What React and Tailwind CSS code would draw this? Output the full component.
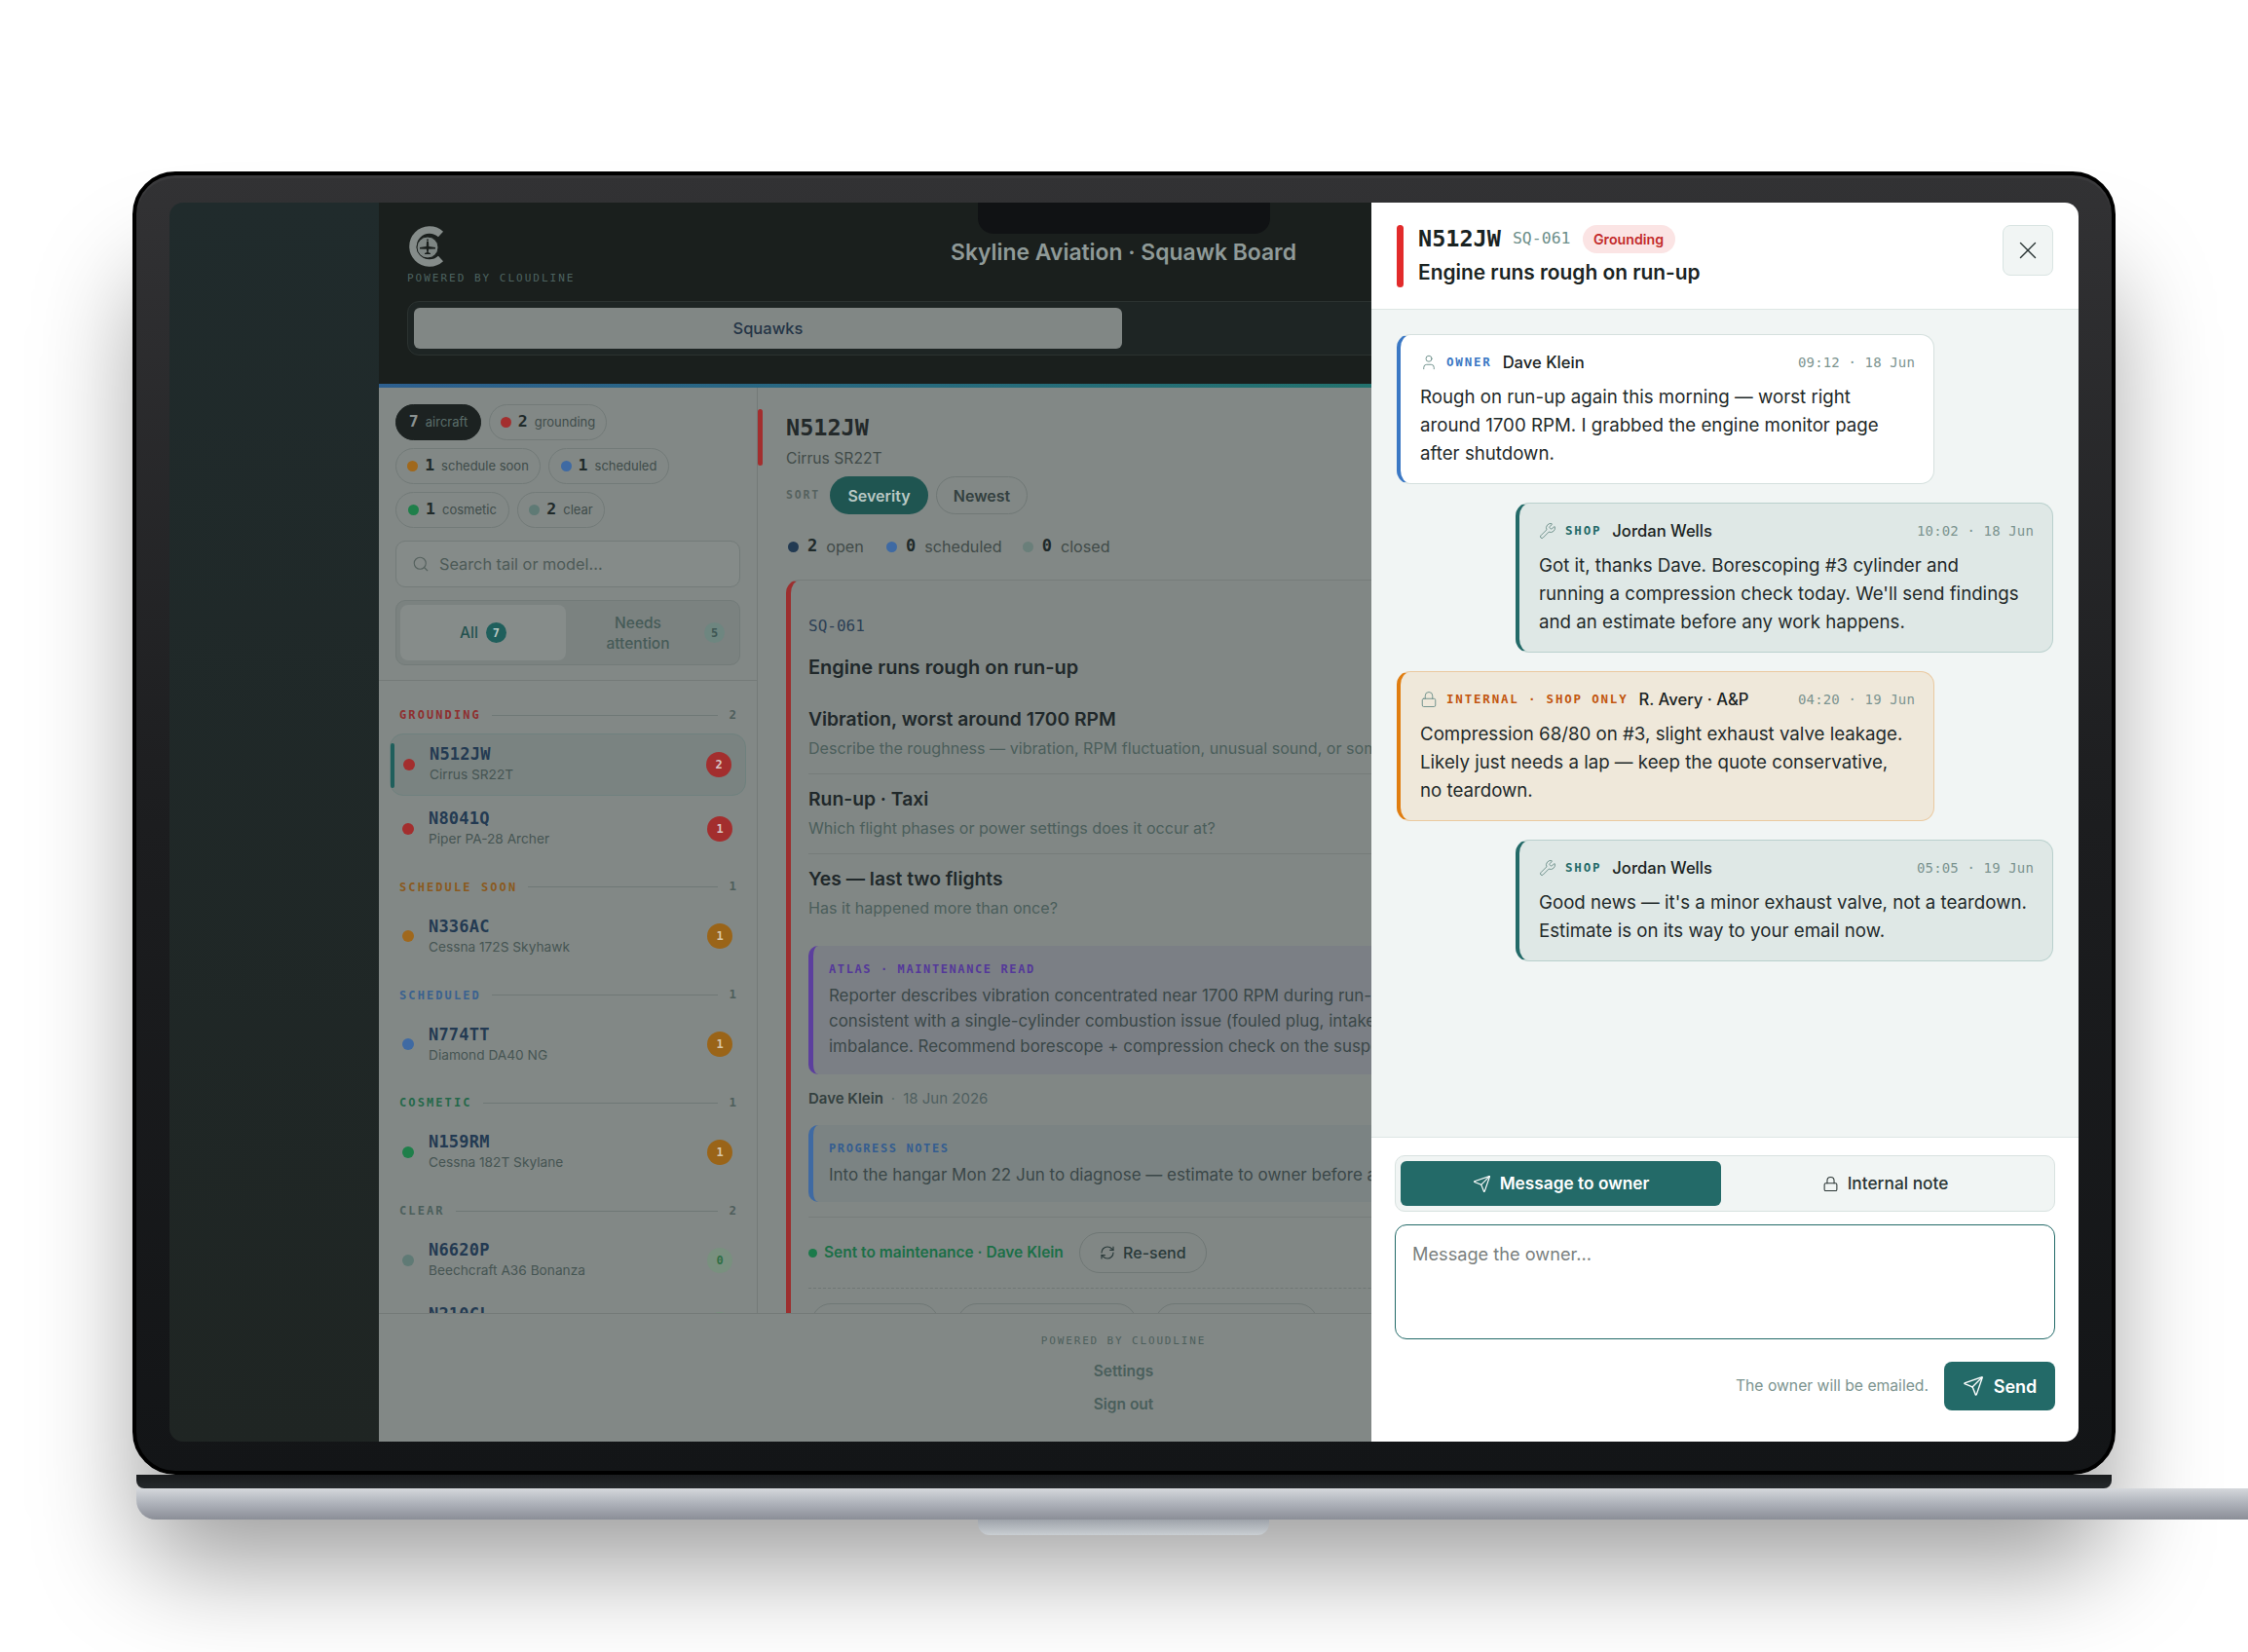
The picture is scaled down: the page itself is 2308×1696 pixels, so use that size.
import { Search, Send, User, Wrench, Lock, X, RefreshCw } from 'lucide-react';

const mono = "font-['DejaVu_Sans_Mono',monospace]";

const chips = [
  { n: 7, label: 'aircraft', width: 'w-[88px]', dark: true },
  { n: 2, label: 'grounding', width: 'w-[121px]', dot: 'bg-[#a32e2e]' },
  { n: 1, label: 'schedule soon', width: 'w-[149px]', dot: 'bg-[#a0681c]' },
  { n: 1, label: 'scheduled', width: 'w-[124px]', dot: 'bg-[#3f6aa3]' },
  { n: 1, label: 'cosmetic', width: 'w-[117px]', dot: 'bg-[#1f7f4a]' },
  { n: 2, label: 'clear', width: 'w-[90px]', dot: 'bg-[#5f7a75]' },
];

const sections = [
  {
    name: 'GROUNDING', count: 2, color: 'text-[#8f2f2f]',
    rows: [
      { tail: 'N512JW', model: 'Cirrus SR22T', dot: 'bg-[#a32e2e]', badge: 'bg-[#a32e2e] text-[#d8c4c2]', n: 2, active: true },
      { tail: 'N8041Q', model: 'Piper PA-28 Archer', dot: 'bg-[#a32e2e]', badge: 'bg-[#a32e2e] text-[#d8c4c2]', n: 1 },
    ],
  },
  {
    name: 'SCHEDULE SOON', count: 1, color: 'text-[#8a5a20]',
    rows: [{ tail: 'N336AC', model: 'Cessna 172S Skyhawk', dot: 'bg-[#a0681c]', badge: 'bg-[#9a6418] text-[#d6c6a8]', n: 1 }],
  },
  {
    name: 'SCHEDULED', count: 1, color: 'text-[#3a628f]',
    rows: [{ tail: 'N774TT', model: 'Diamond DA40 NG', dot: 'bg-[#3f6aa3]', badge: 'bg-[#9a6418] text-[#d6c6a8]', n: 1 }],
  },
  {
    name: 'COSMETIC', count: 1, color: 'text-[#25684a]',
    rows: [{ tail: 'N159RM', model: 'Cessna 182T Skylane', dot: 'bg-[#1f7f4a]', badge: 'bg-[#9a6418] text-[#d6c6a8]', n: 1 }],
  },
  {
    name: 'CLEAR', count: 2, color: 'text-[#4c5f5c]',
    rows: [
      { tail: 'N6620P', model: 'Beechcraft A36 Bonanza', dot: 'bg-[#5f7a75]', badge: 'bg-[#79907f] text-[#2f6f45]', n: 0 },
      { tail: 'N210CL', model: 'Cessna 210 Centurion', dot: 'bg-[#5f7a75]', badge: 'bg-[#79907f] text-[#2f6f45]', n: 0 },
    ],
  },
];

const messages = [
  {
    kind: 'owner', Icon: User, role: 'OWNER', name: 'Dave Klein', time: '09:12 · 18 Jun',
    lines: ['Rough on run-up again this morning — worst right', 'around 1700 RPM. I grabbed the engine monitor page', 'after shutdown.'],
  },
  {
    kind: 'shop', Icon: Wrench, role: 'SHOP', name: 'Jordan Wells', time: '10:02 · 18 Jun',
    lines: ['Got it, thanks Dave. Borescoping #3 cylinder and', "running a compression check today. We'll send findings", 'and an estimate before any work happens.'],
  },
  {
    kind: 'internal', Icon: Lock, role: 'INTERNAL · SHOP ONLY', name: 'R. Avery · A&P', time: '04:20 · 19 Jun',
    lines: ['Compression 68/80 on #3, slight exhaust valve leakage.', 'Likely just needs a lap — keep the quote conservative,', 'no teardown.'],
  },
  {
    kind: 'shop', Icon: Wrench, role: 'SHOP', name: 'Jordan Wells', time: '05:05 · 19 Jun',
    lines: ["Good news — it's a minor exhaust valve, not a teardown.", 'Estimate is on its way to your email now.'],
  },
];

const bubbleStyles = {
  owner: { box: 'bg-white border-[#d5e0de] border-l-[#3b78c4] self-start', role: 'text-[#3b78c4]' },
  shop: { box: 'bg-[#dfe8e6] border-[#b9d0cd] border-l-[#236a68] self-end', role: 'text-[#236a68]' },
  internal: { box: 'bg-[#efe8da] border-[#eac9a0] border-l-[#e07d10] self-start', role: 'text-[#c2560f]' },
};

// C ring with an inset disc and a small plane silhouette
function Logo() {
  return (
    <svg width="40" height="44" viewBox="0 0 40 44" fill="none">
      <path d="M34.5 9.5 A17 17 0 1 0 34.5 34.5" stroke="#858c8a" strokeWidth="7.5" />
      <circle cx="21" cy="23" r="11" fill="#7d8583" stroke="#1a1f1d" strokeWidth="1" />
      <path d="M20.2 14.5h1.6v2h-1.6z M20 17h2l.3 5 6.7 1v1.5l-6.9.2-.4 3.3 2.3 1v1h-6v-1l2.3-1-.4-3.3-6.9-.2V23l6.7-1z" fill="#1a1f1d" />
    </svg>
  );
}

function Chip({ chip }) {
  return (
    <div className={`flex h-[37px] items-center justify-center gap-[7px] rounded-full border ${chip.width} ${chip.dark ? 'border-[#1c2221] bg-[#1c2221]' : 'border-[#727a78]'}`}>
      {chip.dot && <span className={`h-[11px] w-[11px] rounded-full ${chip.dot}`} />}
      <span className={`${mono} text-[16.5px] font-bold ${chip.dark ? 'text-[#8b9290]' : 'text-[#1f2a2a]'}`}>{chip.n}</span>
      <span className={`text-[13px] ${chip.dark ? 'text-[#5b6e6b]' : 'text-[#3f4c4a]'}`}>{chip.label}</span>
    </div>
  );
}

function AircraftRow({ row }) {
  return (
    <div className={`relative flex h-16 shrink-0 items-center gap-[15px] rounded-[14px] pl-[13px] pr-[14px] ${row.active ? 'border border-[#6f817e] bg-[#7a8381]' : ''}`}>
      {row.active && <span className="absolute left-0 top-[9px] h-[46px] w-1 rounded-full bg-[#1f5f5c]" />}
      <span className={`h-[12px] w-[12px] shrink-0 rounded-full ${row.dot}`} />
      <div className="flex min-w-0 flex-1 flex-col gap-px">
        <span className={`${mono} text-[17px] font-bold leading-5 tracking-[0.2px] text-[#233a52]`}>{row.tail}</span>
        <span className="text-[13.7px] leading-5 text-[#465553]">{row.model}</span>
      </div>
      <span className={`${mono} flex h-[26px] w-[26px] items-center justify-center rounded-full text-[12px] font-bold ${row.badge}`}>{row.n}</span>
    </div>
  );
}

function SidebarSection({ section }) {
  return (
    <div className="flex flex-col">
      <div className="flex h-[23px] shrink-0 items-center gap-[11px] px-[10px]">
        <span className={`${mono} text-[12px] font-bold tracking-[2.1px] ${section.color}`}>{section.name}</span>
        <span className="h-px flex-1 bg-[#6f7876]" />
        <span className={`${mono} text-[12.5px] font-bold text-[#4f5e5c]`}>{section.count}</span>
      </div>
      <div className="mt-[7px] flex flex-col gap-[2px]">
        {section.rows.map((row) => <AircraftRow key={row.tail} row={row} />)}
      </div>
    </div>
  );
}

function Sidebar() {
  return (
    <aside className="flex h-full w-[389px] shrink-0 flex-col overflow-hidden border-r border-[#747a78]">
      <div className="shrink-0 border-b border-[#747a78] px-[17px] pb-[15px] pt-[17px]">
        <div className="flex flex-wrap gap-2">
          {chips.map((chip) => <Chip key={chip.label} chip={chip} />)}
        </div>
        <div className="mt-[13px] flex h-12 items-center gap-[10px] rounded-[10px] border border-[#737b79] bg-[#858b89] px-4">
          <Search size={18} strokeWidth={1.5} className="text-[#56625f]" />
          <span className="text-[16.3px] text-[#4d5a57]">Search tail or model...</span>
        </div>
        <div className="mt-[13px] flex h-[67px] gap-2 rounded-[10px] border border-[#737b79] bg-[#7b8280] p-1">
          <div className="flex w-[170px] items-center justify-center gap-2 rounded-lg bg-[#868c8a]">
            <span className="text-[15.5px] font-medium text-[#24524f]">All</span>
            <span className={`${mono} flex h-[21px] w-[21px] items-center justify-center rounded-full bg-[#1f5f5c] text-[12px] font-bold text-[#b8c6c2]`}>7</span>
          </div>
          <div className="flex flex-1 items-center gap-[30px] pl-[28px]">
            <span className="w-[76px] text-center text-[15.5px] font-medium leading-[21px] text-[#465b58]">Needs<br />attention</span>
            <span className={`${mono} flex h-[21px] w-[21px] items-center justify-center rounded-full bg-[#6e8680] text-[12px] font-bold text-[#3f5754]`}>5</span>
          </div>
        </div>
      </div>
      <div className="flex flex-col gap-[16.75px] px-[11px] pt-[23.5px]">
        {sections.map((section) => <SidebarSection key={section.name} section={section} />)}
      </div>
    </aside>
  );
}

function Question({ title, hint, divider = true }) {
  return (
    <div className={divider ? 'border-b border-[#767c7a] pb-[15px]' : ''}>
      <p className="whitespace-nowrap text-[19.3px] font-semibold leading-7 text-[#20282a]">{title}</p>
      <p className="mt-[5px] whitespace-nowrap text-[16.1px] leading-[22px] text-[#4b5e5b]">{hint}</p>
    </div>
  );
}

function SquawkCard() {
  return (
    <div className="ml-[29px] mt-[22px] rounded-[14px] border border-[#767c7a] border-l-[5px] border-l-[#9c2f2f] bg-[#818785] pl-[18px] pt-[37px]">
      <p className={`${mono} text-[16px] font-medium leading-5 text-[#2c4055]`}>SQ-061</p>
      <p className="mt-[18px] whitespace-nowrap text-[20px] font-semibold leading-7 text-[#20282a]">Engine runs rough on run-up</p>
      <div className="mt-[25px] flex flex-col gap-[11px]">
        <Question title="Vibration, worst around 1700 RPM" hint="Describe the roughness — vibration, RPM fluctuation, unusual sound, or something else" />
        <Question title="Run-up · Taxi" hint="Which flight phases or power settings does it occur at?" />
        <Question title="Yes — last two flights" hint="Has it happened more than once?" divider={false} />
      </div>
      <div className="mt-[28px] rounded-[10px] border-l-[5px] border-l-[#5c3f9e] bg-[#7b7f85] pb-4 pl-4 pt-4">
        <p className={`${mono} text-[12px] font-bold leading-4 tracking-[1.6px] text-[#54389a]`}>ATLAS · MAINTENANCE READ</p>
        <p className="mt-[6px] whitespace-nowrap text-[16.9px] leading-[26px] text-[#3a4748]">
          Reporter describes vibration concentrated near 1700 RPM during run-up and taxi,<br />
          consistent with a single-cylinder combustion issue (fouled plug, intake leak) or prop<br />
          imbalance. Recommend borescope + compression check on the suspect cylinder.
        </p>
      </div>
      <p className="mt-[15px] flex h-5 items-center gap-2 text-[15px]">
        <span className="font-semibold text-[#33403f]">Dave Klein</span>
        <span className="text-[#5c6d6a]">·</span>
        <span className="text-[#4f5f60]">18 Jun 2026</span>
      </p>
      <div className="mt-[17px] rounded-[10px] border-l-[5px] border-l-[#3f6aa3] bg-[#7b8383] pb-[15px] pl-4 pt-4">
        <p className={`${mono} text-[12px] font-bold leading-4 tracking-[1.6px] text-[#345d90]`}>PROGRESS NOTES</p>
        <p className="mt-[6px] whitespace-nowrap text-[17px] leading-[26px] text-[#3a4748]">Into the hangar Mon 22 Jun to diagnose — estimate to owner before any work</p>
      </div>
      <div className="mt-[15px] flex items-center gap-4 border-t border-[#767c7a] pt-[15px]">
        <span className="flex items-center gap-[7px] text-[15.5px] font-semibold text-[#1b6f47]">
          <span className="h-[9px] w-[9px] rounded-full bg-[#1b7a4a]" />
          Sent to maintenance · Dave Klein
        </span>
        <span className="flex h-[42px] w-[131px] items-center justify-center gap-2 rounded-full border border-[#6f7775] text-[16px] font-medium text-[#2a3a3a]">
          <RefreshCw size={16} strokeWidth={1.75} />
          Re-send
        </span>
      </div>
      <div className="mt-[15px] flex gap-[19px] border-t border-dashed border-[#6f7775] pl-[3px] pt-[15px]">
        <span className="h-10 w-[131px] rounded-full border border-[#6f7775]" />
        <span className="h-10 w-[184px] rounded-full border border-[#6f7775]" />
        <span className="h-10 w-[167px] rounded-full border border-[#6f7775]" />
      </div>
    </div>
  );
}

function MainColumn() {
  return (
    <main className="h-full flex-1 overflow-hidden pt-[22px]">
      <div className="flex gap-6">
        <span className="h-[58px] w-[5px] rounded-full bg-[#a32e2e]" />
        <div className="pt-1">
          <p className={`${mono} text-[23.5px] font-bold leading-[30px] text-[#23292a]`}>N512JW</p>
          <p className="mt-[6px] text-[15.7px] leading-[22px] text-[#414b49]">Cirrus SR22T</p>
        </div>
      </div>
      <div className="ml-[29px] mt-[7px] flex h-[39px] items-center">
        <span className={`${mono} w-[45px] text-[11.5px] font-bold tracking-[1.8px] text-[#56625f]`}>SORT</span>
        <span className="flex h-[39px] w-[101px] items-center justify-center rounded-full bg-[#1f5551] text-[16px] font-semibold text-[#b9c8c4]">Severity</span>
        <span className="ml-2 flex h-[39px] w-[94px] items-center justify-center rounded-full border border-[#707876] text-[16px] font-semibold text-[#33403f]">Newest</span>
      </div>
      <div className="ml-[29px] mt-[21px] flex h-6 items-center text-[16.2px] text-[#414b49]">
        <span className="ml-[2px] h-[11px] w-[11px] rounded-full bg-[#223a52]" />
        <span className={`${mono} ml-[9px] text-[17px] font-bold text-[#1f2a2a]`}>2</span>
        <span className="ml-[9px]">open</span>
        <span className="ml-[23px] h-[11px] w-[11px] rounded-full bg-[#3f6aa3]" />
        <span className={`${mono} ml-[9px] text-[17px] font-bold text-[#1f2a2a]`}>0</span>
        <span className="ml-[9px]">scheduled</span>
        <span className="ml-[21px] h-[11px] w-[11px] rounded-full bg-[#6a7f7a]" />
        <span className={`${mono} ml-[9px] text-[17px] font-bold text-[#1f2a2a]`}>0</span>
        <span className="ml-[9px]">closed</span>
      </div>
      <SquawkCard />
    </main>
  );
}

function AppHeader() {
  return (
    <header className="shrink-0 bg-[#1a1f1d]">
      <div className="h-[186px] px-[29px] pt-[23px]">
        <div className="grid h-[60px] grid-cols-[1fr_auto_1fr]">
          <div>
            <Logo />
            <p className={`${mono} mt-[4px] text-[11px] leading-[14px] tracking-[2px] text-[#4d6360]`}>POWERED BY CLOUDLINE</p>
          </div>
          <p className="pt-[12px] text-[22.9px] font-semibold leading-[32px] text-[#8f9a98]">Skyline Aviation · Squawk Board</p>
        </div>
        <div className="mt-[18px] flex h-14 gap-1 rounded-xl border border-[#2b3230] bg-[#1e2524] p-[6px]">
          <div className="flex h-full w-[727px] items-center justify-center rounded-md bg-[#818785] text-[16.5px] font-medium text-[#243446]">Squawks</div>
        </div>
      </div>
      <div className="h-1 bg-gradient-to-r from-[#2d5f8f] to-[#1f7a5a]" />
    </header>
  );
}

function Bubble({ msg }) {
  const style = bubbleStyles[msg.kind];
  const { Icon } = msg;
  return (
    <div className={`w-[552px] shrink-0 rounded-[14px] border border-l-4 pb-[16.5px] pl-[20px] pr-[19px] pt-[18px] ${style.box}`}>
      <div className="flex h-5 items-center">
        <Icon size={18} strokeWidth={1.25} className="shrink-0 text-[#6d8f8a]" />
        <span className={`${mono} ml-[9px] text-[12.5px] font-bold tracking-[1.8px] ${style.role}`}>{msg.role}</span>
        <span className="ml-[11px] text-[16.6px] font-medium text-[#1a2322]">{msg.name}</span>
        <span className={`${mono} ml-auto text-[14px] tracking-[0.14px] text-[#7c9490]`}>{msg.time}</span>
      </div>
      <p className="mt-[10.5px] whitespace-nowrap text-[18.7px] leading-[29px] text-[#1f2a2a]">
        {msg.lines.map((line) => <span key={line} className="block">{line}</span>)}
      </p>
    </div>
  );
}

function ChatPanel() {
  return (
    <section className="absolute inset-y-0 right-0 flex w-[726px] flex-col bg-white">
      <div className="flex h-[110px] shrink-0 items-start border-b border-[#dde6e4] pl-[26px] pr-[26px] pt-[23px]">
        <span className="h-16 w-[7px] rounded-full bg-[#e22b2b]" />
        <div className="ml-[15px] flex-1">
          <div className="flex h-[29px] items-center">
            <span className={`${mono} text-[23.5px] font-bold text-[#1a2322]`}>N512JW</span>
            <span className={`${mono} ml-3 text-[16.5px] font-medium text-[#6d8f8a]`}>SQ-061</span>
            <span className="ml-3 flex h-[29px] w-[95px] items-center justify-center rounded-full bg-[#fbe4e4] text-[14.2px] font-semibold text-[#c22a2a]">Grounding</span>
          </div>
          <p className="mt-[6px] text-[20.9px] font-semibold leading-7 text-[#1a2322]">Engine runs rough on run-up</p>
        </div>
        <span className="flex h-[52px] w-[52px] items-center justify-center rounded-lg border border-[#d9e4e2] bg-[#f1f5f4] text-[#2a3534]">
          <X size={30} strokeWidth={1.1} />
        </span>
      </div>
      <div className="flex flex-1 flex-col gap-[19px] bg-[#f1f5f4] px-[26px] pt-[25px]">
        {messages.map((msg) => <Bubble key={msg.time} msg={msg} />)}
      </div>
      <div className="h-[313px] shrink-0 border-t border-[#dde6e4] px-6 pt-[18px]">
        <div className="flex h-[58px] rounded-[10px] border border-[#d8e2e0] bg-[#f1f5f4] p-[5px]">
          <div className="flex w-[329px] items-center justify-center gap-[9px] rounded-md bg-[#236a68] text-[17.3px] font-semibold text-white">
            <Send size={19} strokeWidth={1.5} />
            Message to owner
          </div>
          <div className="flex flex-1 items-center justify-center gap-[9px] text-[17.3px] font-medium text-[#2a3534]">
            <Lock size={17} strokeWidth={1.5} />
            Internal note
          </div>
        </div>
        <textarea
          className="mt-[13px] block h-[118px] w-full resize-none rounded-xl border border-[#236a68] px-[17px] py-[15px] text-[18.2px] leading-7 outline-none placeholder:text-[#7a7f7e]"
          placeholder="Message the owner..."
          readOnly
        />
        <div className="mt-[23px] flex items-center justify-end">
          <span className="text-[15.7px] text-[#7c9490]">The owner will be emailed.</span>
          <span className="ml-4 flex h-[50px] w-[114px] items-center justify-center gap-[10px] rounded-lg bg-[#236a68] text-[18px] font-semibold text-white">
            <Send size={22} strokeWidth={1.5} />
            Send
          </span>
        </div>
      </div>
    </section>
  );
}

function Screen() {
  return (
    <div className="relative flex h-[1272px] w-[1960px] overflow-hidden rounded-[14px]">
      <div className="w-[215px] shrink-0 bg-gradient-to-b from-[#202b2c] to-[#1f2523]" />
      <div className="flex w-[1529px] shrink-0 flex-col bg-[#828886]">
        <AppHeader />
        <div className="flex h-[950px] shrink-0">
          <Sidebar />
          <MainColumn />
        </div>
        <footer className="flex flex-1 flex-col items-center border-t border-[#747a78] pt-[20px]">
          <p className={`${mono} text-[11px] leading-4 tracking-[1.85px] text-[#4d5f5c]`}>POWERED BY CLOUDLINE</p>
          <p className="mt-[13px] text-[15.5px] font-semibold leading-5 text-[#4a5f5c]">Settings</p>
          <p className="mt-[14px] text-[15.5px] font-semibold leading-5 text-[#4a5f5c]">Sign out</p>
        </footer>
      </div>
      <span className="absolute left-1/2 top-0 h-8 w-[300px] -translate-x-1/2 rounded-b-2xl bg-[#101214]" />
      <ChatPanel />
    </div>
  );
}

export default function App() {
  return (
    <div className="h-[1696px] w-[2308px] overflow-hidden bg-white pl-[136px] pt-[176px] font-[Inter,sans-serif]">
      <div className="h-[1338px] w-[2036px] rounded-[44px] border-[4px] border-black bg-gradient-to-b from-[#323234] via-[#1c1d1f] to-[#131517] px-[34px] pt-[28px] shadow-[inset_0_3px_0_#3a3a3c,0_100px_110px_-10px_rgba(0,0,0,0.4)]">
        <Screen />
      </div>
      <div className="ml-[4px] h-[14px] w-[2028px] rounded-b-lg bg-gradient-to-b from-[#1a1c1e] to-[#24282b]" />
      <div className="ml-[4px] h-8 w-[2172px] rounded-bl-[20px] bg-gradient-to-b from-[#d5d8dc] via-[#adb1b9] to-[#8b8e97]" />
      <div className="ml-[868px] h-4 w-[299px] rounded-b-xl bg-gradient-to-b from-[#9ea3aa] to-[#c9ced2]" />
    </div>
  );
}
